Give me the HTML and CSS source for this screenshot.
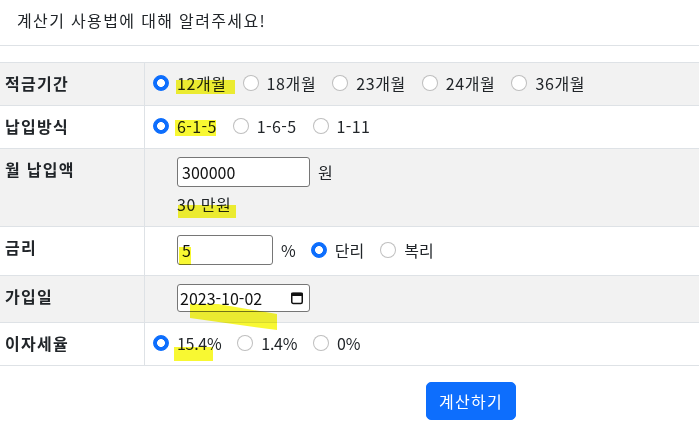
FILE: index.html
```html
<!DOCTYPE html>
<html lang="ko">
<head>
<meta charset="utf-8">
<title>적금 계산기</title>
<link rel="stylesheet" href="styles.css">
</head>
<body>
<header class="intro">계산기 사용법에 대해 알려주세요!</header>

<table class="calc">
  <tbody>
    <tr class="striped">
      <th>적금기간</th>
      <td>
        <div class="options">
          <label class="opt opt-ko"><input type="radio" name="period" checked><span>12개월</span></label>
          <label class="opt opt-ko"><input type="radio" name="period"><span>18개월</span></label>
          <label class="opt opt-ko"><input type="radio" name="period"><span>23개월</span></label>
          <label class="opt opt-ko"><input type="radio" name="period"><span>24개월</span></label>
          <label class="opt opt-ko"><input type="radio" name="period"><span>36개월</span></label>
        </div>
      </td>
    </tr>
    <tr>
      <th>납입방식</th>
      <td>
        <div class="options">
          <label class="opt opt-num"><input type="radio" name="method" checked><span>6-1-5</span></label>
          <label class="opt opt-num"><input type="radio" name="method"><span>1-6-5</span></label>
          <label class="opt opt-num"><input type="radio" name="method"><span>1-11</span></label>
        </div>
      </td>
    </tr>
    <tr class="striped">
      <th>월 납입액</th>
      <td>
        <div class="field-col">
          <div class="field-row">
            <input class="text-input w-wide" type="text" value="300000">
            <span class="unit">원</span>
          </div>
          <div class="hint">30 만원</div>
        </div>
      </td>
    </tr>
    <tr>
      <th>금리</th>
      <td>
        <div class="field-col">
          <div class="field-row">
            <input class="text-input w-narrow" type="text" value="5">
            <span class="unit">%</span>
            <label class="opt opt-after-unit"><input type="radio" name="interest" checked><span>단리</span></label>
            <label class="opt"><input type="radio" name="interest"><span>복리</span></label>
          </div>
        </div>
      </td>
    </tr>
    <tr class="striped">
      <th>가입일</th>
      <td>
        <div class="field-col">
          <label class="date-field">
            <input class="date-text" type="text" value="2023-10-02">
            <svg class="cal-icon" width="14" height="14" viewBox="0 0 14 14" aria-hidden="true">
              <rect x="1.75" y="2.5" width="10.5" height="10" rx="1.5" fill="none" stroke="#111" stroke-width="1.5"/>
              <rect x="1" y="1.5" width="12" height="3.6" rx="1.4" fill="#111"/>
            </svg>
          </label>
        </div>
      </td>
    </tr>
    <tr>
      <th>이자세율</th>
      <td>
        <div class="options">
          <label class="opt opt-tax"><input type="radio" name="tax" checked><span>15.4%</span></label>
          <label class="opt opt-tax"><input type="radio" name="tax"><span>1.4%</span></label>
          <label class="opt opt-tax"><input type="radio" name="tax"><span>0%</span></label>
        </div>
      </td>
    </tr>
  </tbody>
</table>

<div class="actions">
  <button class="btn-primary" type="button">계산하기</button>
</div>

<div class="marks" aria-hidden="true">
  <span class="mark mark-period"></span>
  <span class="mark mark-method"></span>
  <span class="mark mark-amount"></span>
  <span class="mark mark-rate"></span>
  <span class="mark mark-date"></span>
  <span class="mark mark-tax"></span>
</div>
</body>
</html>
```

FILE: styles.css
```css
* {
  box-sizing: border-box;
}

body {
  margin: 0;
  position: relative;
  font-family: "Noto Sans CJK KR", "Noto Sans", sans-serif;
  font-size: 16px;
  line-height: 24px;
  color: #212529;
  background: #fff;
}

.intro {
  padding: 8px 17px 13px;
  border-bottom: 1px solid #dee2e6;
  margin-bottom: 16px;
  letter-spacing: 1.35px;
}

.calc {
  width: 100%;
  border-collapse: separate;
  border-spacing: 0;
  table-layout: fixed;
}

.calc tr:first-child th,
.calc tr:first-child td {
  border-top: 1px solid #dee2e6;
}

.calc th,
.calc td {
  border-bottom: 1px solid #dee2e6;
  vertical-align: top;
  padding: 8px 8px 10px;
  text-align: left;
}

.calc th {
  width: 145px;
  padding-left: 5px;
  font-weight: 700;
  letter-spacing: 1.3px;
  border-right: 1px solid #dee2e6;
}

.striped th,
.striped td {
  background: #f2f2f2;
}

.options {
  display: flex;
  align-items: center;
  height: 24px;
}

.opt {
  display: flex;
  align-items: center;
  margin-right: 16px;
}

.opt-ko {
  letter-spacing: 0.6px;
}

.opt-num {
  letter-spacing: 0.4px;
}

.opt-tax span {
  letter-spacing: -0.3px;
}

.opt input[type="radio"] {
  appearance: none;
  -webkit-appearance: none;
  width: 16px;
  height: 16px;
  margin: 0 8px 0 0;
  border: 1px solid rgba(0, 0, 0, 0.25);
  border-radius: 50%;
  background: #fff;
  flex: none;
}

.opt input[type="radio"]:checked {
  border-color: #0d6efd;
  background: radial-gradient(circle at center, #fff 0 3.6px, #0d6efd 4.2px);
}

.field-col {
  padding-left: 24px;
  display: flex;
  flex-direction: column;
  align-items: flex-start;
}

.field-row {
  display: flex;
  align-items: center;
}

.text-input {
  height: 30px;
  padding: 0 4px;
  border: 1px solid #767676;
  border-radius: 3px;
  font: inherit;
  color: #111;
  background: #fff;
}

.w-wide {
  width: 133px;
}

.w-narrow {
  width: 96px;
}

.unit {
  margin-left: 8px;
}

.opt-after-unit {
  margin-left: 15px;
}

.hint {
  margin-top: 5px;
  letter-spacing: 0.5px;
}

.date-field {
  width: 133px;
  height: 28px;
  display: flex;
  align-items: center;
  justify-content: space-between;
  padding: 0 5px 0 2px;
  border: 1px solid #767676;
  border-radius: 3px;
  background: #fff;
}

.date-text {
  width: 100px;
  border: 0;
  padding: 0;
  font: inherit;
  color: #111;
  background: transparent;
}

.cal-icon {
  flex: none;
}

.actions {
  padding: 16px 0 0 426px;
}

.btn-primary {
  padding: 6px 12px;
  font: inherit;
  line-height: 24px;
  letter-spacing: 1.25px;
  color: #fff;
  background: #0d6efd;
  border: 1px solid #0d6efd;
  border-radius: 5px;
}

.marks {
  position: absolute;
  inset: 0;
  pointer-events: none;
}

.mark {
  position: absolute;
  background: #f8f820;
  mix-blend-mode: multiply;
  opacity: 0.92;
}

.mark-period {
  left: 176px;
  top: 80px;
  width: 59px;
  height: 14px;
}

.mark-method {
  left: 175px;
  top: 120px;
  width: 41px;
  height: 16px;
}

.mark-amount {
  left: 178px;
  top: 205px;
  width: 58px;
  height: 13px;
}

.mark-rate {
  left: 179px;
  top: 247px;
  width: 12px;
  height: 18px;
}

.mark-date {
  left: 190px;
  top: 304px;
  width: 87px;
  height: 27px;
  clip-path: polygon(0 0, 28px 0, 87px 10px, 87px 26px, 50px 21px, 0 14px);
}

.mark-tax {
  left: 174px;
  top: 347px;
  width: 39px;
  height: 14px;
}
```
